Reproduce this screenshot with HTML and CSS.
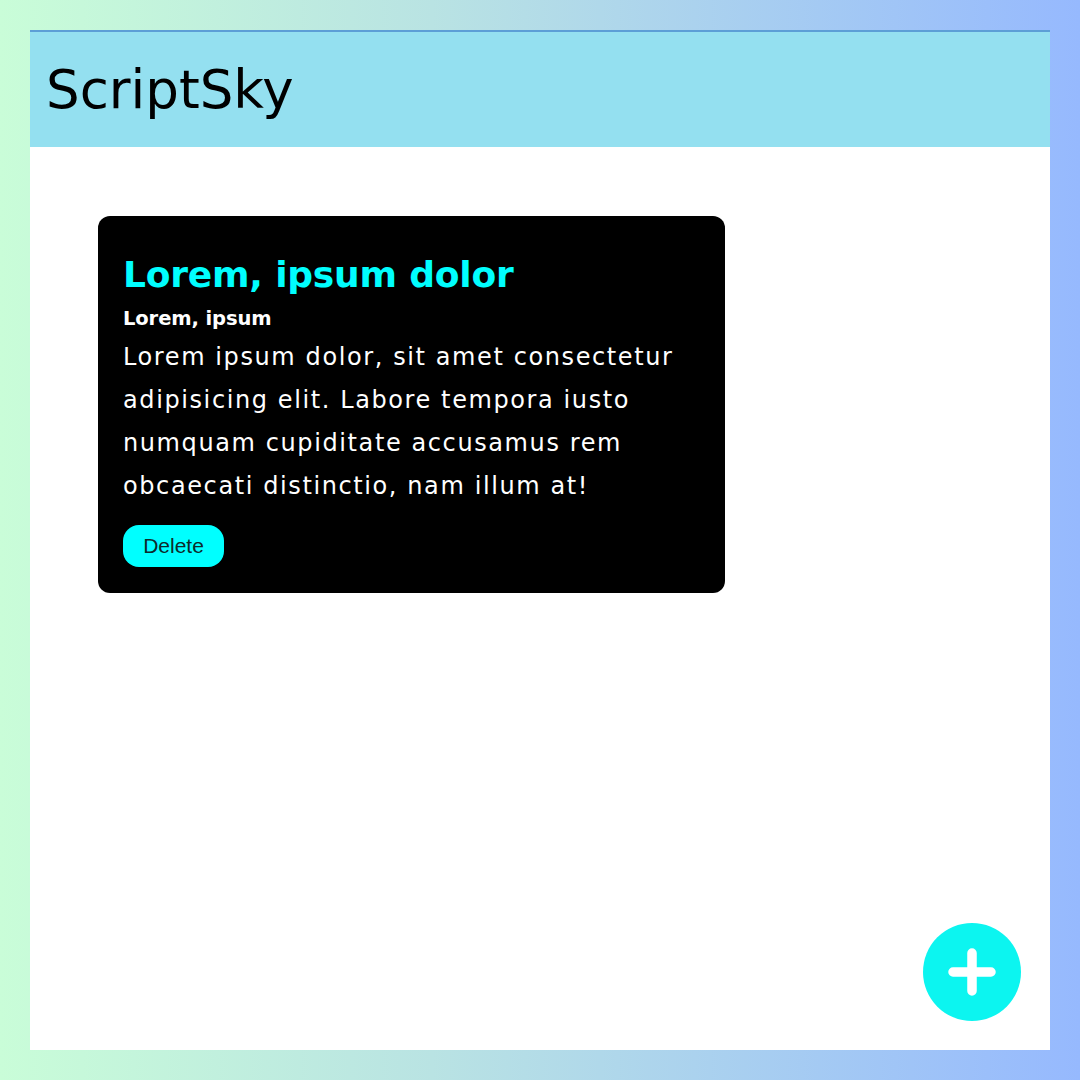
FILE: index.html
```html
<!DOCTYPE html>
<html>
<head>
<meta charset="utf-8">
<link rel="stylesheet" href="styles.css">
</head>
<body>
<div class="frame">
  <div class="panel">
    <header class="header"><h1 class="brand">ScriptSky</h1></header>
    <main class="notes">
      <div class="card">
        <h2 class="card-title">Lorem, ipsum dolor</h2>
        <h3 class="card-sub">Lorem, ipsum</h3>
        <p class="card-body">Lorem ipsum dolor, sit amet consectetur adipisicing elit. Labore tempora iusto numquam cupiditate accusamus rem obcaecati distinctio, nam illum at!</p>
        <button class="delete">Delete</button>
      </div>
    </main>
    <button class="fab" aria-label="Add">
      <svg width="50" height="50" viewBox="0 0 50 50"><path d="M25 6 V44 M6 25 H44" stroke="#fff" stroke-width="9.5" stroke-linecap="round" fill="none"/></svg>
    </button>
  </div>
</div>
</body>
</html>
```
FILE: styles.css
```css
* { box-sizing: border-box; }
html, body { margin: 0; padding: 0; }
body {
  width: 1080px;
  height: 1080px;
  background: linear-gradient(90deg, #c9fdd8 0%, #b9e3e3 40%, #96b9fe 100%);
  font-family: "DejaVu Sans", sans-serif;
}
.frame { padding: 30px; height: 1080px; }
.panel {
  position: relative;
  background: #fff;
  width: 1020px;
  height: 1020px;
}
.header {
  height: 117px;
  background: #94e0f0;
  border-top: 2px solid #5c9fd6;
  display: flex;
  align-items: center;
  padding-left: 16px;
}
.brand {
  margin: 0;
  font-family: "DejaVu Sans", sans-serif;
  font-weight: 400;
  font-size: 53px;
  color: #000;
  line-height: 1;
}
.notes { padding: 69px 0 0 68px; }
.card {
  width: 627px;
  height: 377px;
  background: #000;
  border-radius: 12px;
  padding: 37px 25px 0;
}
.card-title {
  margin: 0;
  color: #00fefe;
  font-size: 36px;
  font-weight: 700;
  line-height: 44px;
  letter-spacing: -0.2px;
}
.card-sub {
  margin: 10px 0 0;
  color: #fff;
  font-size: 19.5px;
  font-weight: 700;
  line-height: 24px;
  letter-spacing: -0.1px;
}
.card-body {
  margin: 5px 0 0;
  color: #fff;
  font-size: 24px;
  line-height: 43px;
  font-weight: 400;
  letter-spacing: 1.6px;
}
.delete {
  display: block;
  margin-top: 17px;
  background: #00ffff;
  border: none;
  border-radius: 16px;
  width: 101px;
  height: 42px;
  font-family: "Liberation Sans", Arial, sans-serif;
  font-size: 21px;
  color: #0d2b2b;
  padding: 0;
}
.fab {
  position: absolute;
  right: 29px;
  bottom: 29px;
  width: 98px;
  height: 98px;
  border-radius: 50%;
  background: #0cf5f0;
  border: none;
  display: flex;
  align-items: center;
  justify-content: center;
  padding: 0;
}
```
